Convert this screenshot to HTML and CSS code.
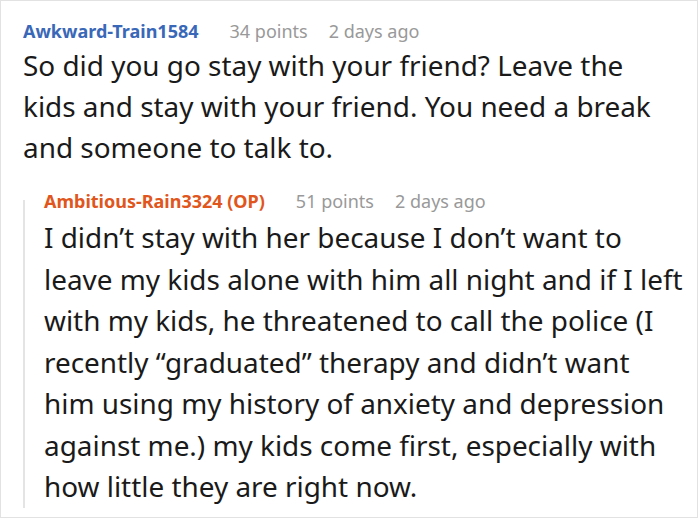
FILE: index.html
```html
<!DOCTYPE html>
<html>
<head>
<meta charset="utf-8">
<link rel="stylesheet" href="styles.css">
</head>
<body>
<div class="frame">
  <div class="comment">
    <div class="meta">
      <span class="user">Awkward-Train1584</span>
      <span class="info">34 points</span>
      <span class="info">2 days ago</span>
    </div>
    <p class="body main">So did you go stay with your friend? Leave the kids and stay with your friend. You need a break and someone to talk to.</p>
    <div class="reply">
      <div class="rail"></div>
      <div class="reply-content">
        <div class="meta">
          <span class="user op">Ambitious-Rain3324 (OP)</span>
          <span class="info">51 points</span>
          <span class="info">2 days ago</span>
        </div>
        <p class="body">I didn’t stay with her because I don’t want to leave my kids alone with him all night and if I left with my kids, he threatened to call the police (I recently “graduated” therapy and didn’t want<br>him using my history of anxiety and depression against me.) my kids come first, especially with how little they are right now.</p>
      </div>
    </div>
  </div>
</div>
</body>
</html>
```
FILE: styles.css
```css
html, body {
  margin: 0;
  padding: 0;
  background: #ffffff;
}
.frame {
  width: 696px;
  height: 516px;
  border: 1px solid #e2e2e2;
  box-sizing: content-box;
  overflow: hidden;
  font-family: "Noto Sans", sans-serif;
}
.comment {
  padding: 17px 0 0 22px;
}
.meta {
  display: flex;
  gap: 21px;
  font-size: 18px;
  line-height: 26px;
}
.user {
  font-weight: bold;
  color: #3a68b8;
  margin-right: 10px;
}
.user.op {
  color: #e0561c;
}
.info {
  color: #999999;
}
.body {
  margin: 1px 0 0 0;
  font-size: 27.9px;
  line-height: 41px;
  color: #1a1a1a;
}
.body.main {
  padding-right: 30px;
}
.reply {
  display: flex;
  margin-top: 20px;
}
.rail {
  width: 2px;
  flex: none;
  margin-top: 12px;
  background: #e4e4e4;
}
.reply-content {
  flex: 1;
  padding-left: 19px;
}
.reply-content .body {
  margin-top: 3px;
  line-height: 41.5px;
}
```
